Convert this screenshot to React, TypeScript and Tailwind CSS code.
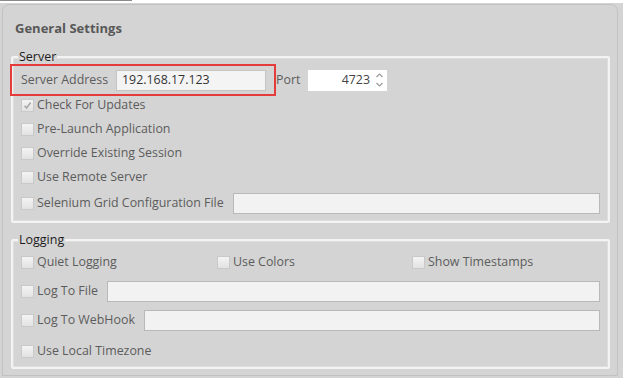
import { FC, ReactNode } from 'react'

const Check: FC<{ checked?: boolean }> = ({ checked }) => (
  <span className="flex h-[13px] w-[13px] shrink-0 items-center justify-center border border-[#c9c9c9] bg-gradient-to-b from-[#f4f4f4] to-[#e2e2e2]">
    {checked && (
      <svg width="9" height="9" viewBox="0 0 9 9">
        <path d="M1.5 4.8 L3.6 7 L7.6 1.6" fill="none" stroke="#a8a8a8" strokeWidth="1.6" />
      </svg>
    )}
  </span>
)

const CheckRow: FC<{ label: string; checked?: boolean; className?: string }> = ({ label, checked, className }) => (
  <div className={`flex h-[16px] items-center gap-[3px] ${className ?? ''}`}>
    <Check checked={checked} />
    <span className="whitespace-nowrap">{label}</span>
  </div>
)

const TextBox: FC<{ className?: string; children?: ReactNode }> = ({ className, children }) => (
  <div className={`flex h-[21px] items-center border border-[#b9b9b9] bg-[#f2f2f2] px-[5px] ${className ?? ''}`}>
    {children}
  </div>
)

const Group: FC<{ title: string; className?: string; children: ReactNode }> = ({ title, className, children }) => (
  <fieldset className={`ml-[8px] mr-[7px] rounded-[2px] border-2 border-[#f3f3f3] px-[8px] shadow-[inset_0_0_0_1px_#dedede] ${className ?? ''}`}>
    <legend className="-ml-[3px] px-[1px] text-[12.5px] leading-[16px] text-[#1c1c1c]">{title}</legend>
    {children}
  </fieldset>
)

export default function App() {
  return (
    <div
      className="flex h-[378px] w-[623px] flex-col overflow-hidden bg-[#d4d4d4] text-[12.4px] text-[#5c5c5c]"
      style={{ fontFamily: '"Open Sans", "Noto Sans", sans-serif' }}
    >
      {/* top strip */}
      <div className="flex h-[3px] shrink-0 flex-col bg-white">
        <div className="h-[1px] w-[132px] bg-[#8a8a8a]" />
      </div>

      <div className="mb-[2px] ml-[2px] mr-[5px] mt-[1px] flex flex-1 flex-col rounded-t-[7px] border border-[#c2c2c2] bg-[#d4d4d4]">
        <div className="h-[44px] pl-[12px] pt-[14px] text-[13px] font-bold leading-[18px] text-[#585858]">General Settings</div>

        <Group title="Server" className="pb-[7px]">
          <div className="-ml-[11px] -mt-[1px] flex items-center">
            <div className="flex h-[32px] w-[266px] items-center border-2 border-[#e53b3b] pl-[9px]">
              <span className="w-[95px] whitespace-nowrap">Server Address</span>
              <TextBox className="w-[150px] border-[#c4c4c4] bg-[#f4f4f4] text-[#333]">192.168.17.123</TextBox>
            </div>
            <span className="w-[32px]">Port</span>
            <div className="flex h-[21px] w-[79px] items-center justify-end bg-white pr-[3px] text-[#444]">
              <span>4723</span>
              <svg className="ml-[5px]" width="9" height="16" viewBox="0 0 9 16">
                <path d="M1.5 5 L4.5 2 L7.5 5" fill="none" stroke="#9a9a9a" strokeWidth="1.2" />
                <path d="M1.5 11 L4.5 14 L7.5 11" fill="none" stroke="#9a9a9a" strokeWidth="1.2" />
              </svg>
            </div>
          </div>
          <CheckRow className="mt-[1px]" label="Check For Updates" checked />
          <CheckRow className="mt-[8px]" label="Pre-Launch Application" />
          <CheckRow className="mt-[8px]" label="Override Existing Session" />
          <CheckRow className="mt-[8px]" label="Use Remote Server" />
          <div className="mt-[8px] flex h-[21px] items-center gap-[9px]">
            <CheckRow label="Selenium Grid Configuration File" />
            <TextBox className="flex-1" />
          </div>
        </Group>

        <Group title="Logging" className="mt-[9px] pb-[8px]">
          <div className="mt-[6px] grid grid-cols-[196px_195px_1fr]">
            <CheckRow label="Quiet Logging" />
            <CheckRow label="Use Colors" />
            <CheckRow label="Show Timestamps" />
          </div>
          <div className="mt-[11px] flex h-[21px] items-center gap-[9px]">
            <CheckRow label="Log To File" />
            <TextBox className="flex-1" />
          </div>
          <div className="mt-[8px] flex h-[21px] items-center gap-[9px]">
            <CheckRow label="Log To WebHook" />
            <TextBox className="flex-1" />
          </div>
          <CheckRow className="mt-[12px]" label="Use Local Timezone" />
        </Group>
      </div>
    </div>
  )
}
